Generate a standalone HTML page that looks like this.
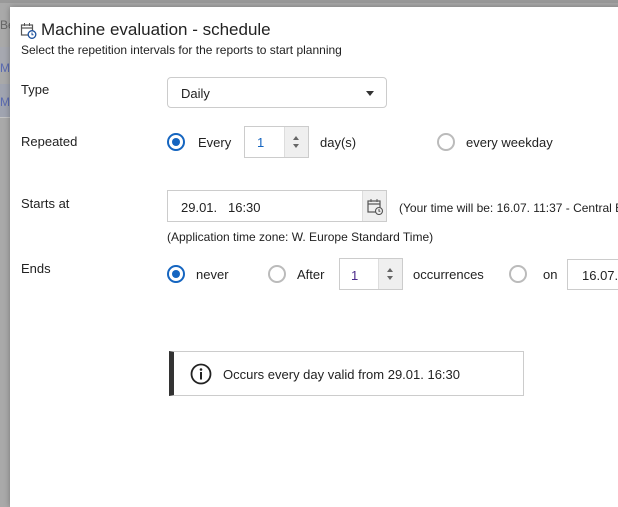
<!DOCTYPE html>
<html><head><meta charset="utf-8"><style>
*{box-sizing:border-box;margin:0;padding:0}
body{width:618px;height:494px;overflow:hidden;position:relative;background:#a9a9a9;font-family:"Liberation Sans",Arial,sans-serif;color:#222}
.a{position:absolute}
.dlg{left:10px;top:7px;width:620px;height:500px;background:#fff;box-shadow:0 0 6px rgba(0,0,0,.3)}
.t13{font-size:13px}
.radio{width:18px;height:18px;border-radius:50%;border:2px solid #bbb;background:#fff}
.radio.on{border-color:#1565c0}
.radio.on::after{content:"";position:absolute;left:3px;top:3px;width:8px;height:8px;border-radius:50%;background:#1565c0}
.box{border:1px solid #ccc;background:#fff}
.spin{position:absolute;right:0;top:0;bottom:0;width:24px;background:#efefef;border-left:1px solid #ddd}
.spin::before{content:"";position:absolute;left:8px;top:9px;border:3.5px solid transparent;border-bottom:4px solid #666;border-top:0}
.spin::after{content:"";position:absolute;left:8px;bottom:9px;border:3.5px solid transparent;border-top:4px solid #666;border-bottom:0}
</style></head><body>
<div class="a" style="left:0;top:0;width:618px;height:3px;background:#999"></div>
<div class="a" style="left:0;top:47px;width:10px;height:25px;background:#a6a8b0"></div>
<div class="a" style="left:0;top:84px;width:10px;height:33px;background:#a0a4b0"></div>
<div class="a" style="left:0;top:117px;width:10px;height:1px;background:#c4c4c4"></div>
<div class="a" style="left:0;top:18px;font-size:12px;color:#666">Be</div>
<div class="a" style="left:0;top:61px;font-size:12px;color:#5a6ab0">M</div>
<div class="a" style="left:0;top:95px;font-size:12px;color:#5a6ab0">M</div>
<div class="a dlg"></div>
<svg class="a" style="left:20px;top:22px" width="17" height="17" viewBox="0 0 17 17"><rect x="1.5" y="3" width="11" height="10" fill="none" stroke="#555" stroke-width="1.2"/><line x1="1.5" y1="6" x2="12.5" y2="6" stroke="#555" stroke-width="1.2"/><line x1="4.5" y1="1" x2="4.5" y2="4" stroke="#555"/><line x1="9.5" y1="1" x2="9.5" y2="4" stroke="#555"/><circle cx="12" cy="12.5" r="3.8" fill="#fff" stroke="#1a4f9c" stroke-width="1.3"/><path d="M12 10.5v2.2h1.5" stroke="#1a4f9c" fill="none"/></svg>
<div class="a" style="left:41px;top:20px;font-size:17px;color:#222">Machine evaluation - schedule</div>
<div class="a" style="left:21px;top:43px;font-size:12px">Select the repetition intervals for the reports to start planning</div>
<div class="a t13" style="left:21px;top:82px">Type</div>
<div class="a box" style="left:167px;top:77px;width:220px;height:31px;border-radius:4px"><span class="a t13" style="left:13px;top:8px">Daily</span><span class="a" style="left:198px;top:13px;border:4px solid transparent;border-top:5px solid #333;border-bottom:0"></span></div>
<div class="a t13" style="left:21px;top:134px">Repeated</div>
<div class="a radio on" style="left:167px;top:133px"></div>
<div class="a t13" style="left:198px;top:135px">Every</div>
<div class="a box" style="left:244px;top:126px;width:65px;height:32px"><span class="a t13" style="left:12px;top:8px;color:#1565c0">1</span><div class="spin"></div></div>
<div class="a t13" style="left:320px;top:135px">day(s)</div>
<div class="a radio" style="left:437px;top:133px"></div>
<div class="a t13" style="left:466px;top:135px">every weekday</div>
<div class="a t13" style="left:21px;top:196px">Starts at</div>
<div class="a box" style="left:167px;top:190px;width:220px;height:32px"><span class="a t13" style="left:13px;top:9px">29.01.&nbsp;&nbsp;&nbsp;16:30</span><div class="a" style="right:0;top:0;bottom:0;width:24px;background:#efefef;border-left:1px solid #ddd"><svg class="a" style="left:3px;top:7px" width="18" height="17" viewBox="0 0 17 17"><rect x="1.5" y="3" width="12" height="11" fill="none" stroke="#555" stroke-width="1.2"/><line x1="1.5" y1="6" x2="13.5" y2="6" stroke="#555" stroke-width="1.2"/><line x1="4.5" y1="1" x2="4.5" y2="4" stroke="#555"/><line x1="10.5" y1="1" x2="10.5" y2="4" stroke="#555"/><circle cx="12.5" cy="13" r="3.5" fill="#efefef" stroke="#555" stroke-width="1.1"/><path d="M12.5 11v2.2h1.4" stroke="#555" fill="none"/></svg></div></div>
<div class="a" style="left:399px;top:201px;font-size:12px;white-space:nowrap">(Your time will be: 16.07. 11:37 - Central E</div>
<div class="a" style="left:167px;top:230px;font-size:12px">(Application time zone: W. Europe Standard Time)</div>
<div class="a t13" style="left:21px;top:261px">Ends</div>
<div class="a radio on" style="left:167px;top:265px"></div>
<div class="a t13" style="left:196px;top:267px">never</div>
<div class="a radio" style="left:268px;top:265px"></div>
<div class="a t13" style="left:297px;top:267px">After</div>
<div class="a box" style="left:339px;top:258px;width:64px;height:32px"><span class="a t13" style="left:11px;top:9px;color:#4a2a8a">1</span><div class="spin"></div></div>
<div class="a t13" style="left:413px;top:267px">occurrences</div>
<div class="a radio" style="left:509px;top:265px"></div>
<div class="a t13" style="left:543px;top:267px">on</div>
<div class="a box" style="left:567px;top:259px;width:80px;height:31px"><span class="a t13" style="left:14px;top:8px">16.07.</span></div>
<div class="a" style="left:169px;top:351px;width:355px;height:45px;border:1px solid #ccc;border-left:5px solid #333;background:#fff"></div>
<svg class="a" style="left:190px;top:363px" width="22" height="22" viewBox="0 0 22 22"><circle cx="11" cy="11" r="9.5" fill="none" stroke="#222" stroke-width="1.8"/><circle cx="11" cy="6.5" r="1.3" fill="#222"/><rect x="10" y="9" width="2" height="7.5" fill="#222"/></svg>
<div class="a t13" style="left:223px;top:367px">Occurs every day valid from 29.01. 16:30</div>
</body></html>
